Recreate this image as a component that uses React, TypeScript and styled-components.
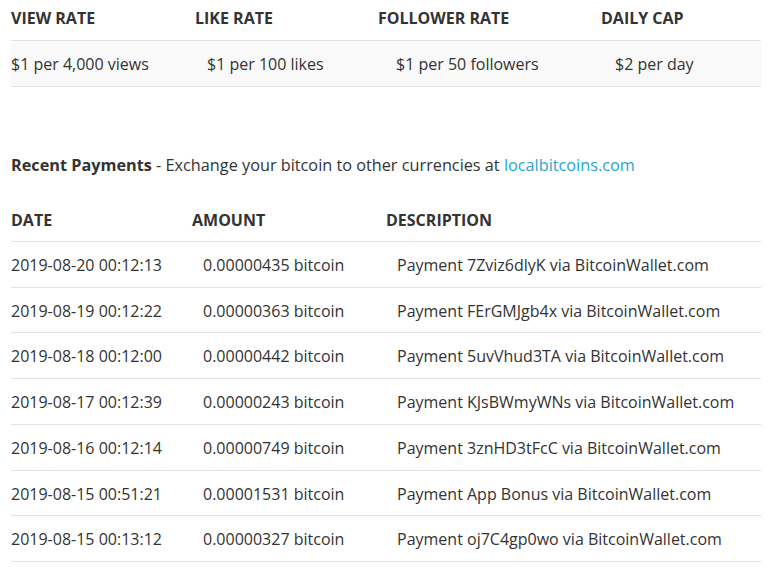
import React from 'react';
import styled, { createGlobalStyle } from 'styled-components';

interface Payment {
  date: string;
  amount: string;
  code: string;
}

const rates = [
  { label: 'VIEW RATE', value: '$1 per 4,000 views' },
  { label: 'LIKE RATE', value: '$1 per 100 likes' },
  { label: 'FOLLOWER RATE', value: '$1 per 50 followers' },
  { label: 'DAILY CAP', value: '$2 per day' },
];

const payments: Payment[] = [
  { date: '2019-08-20 00:12:13', amount: '0.00000435', code: '7Zviz6dlyK' },
  { date: '2019-08-19 00:12:22', amount: '0.00000363', code: 'FErGMJgb4x' },
  { date: '2019-08-18 00:12:00', amount: '0.00000442', code: '5uvVhud3TA' },
  { date: '2019-08-17 00:12:39', amount: '0.00000243', code: 'KJsBWmyWNs' },
  { date: '2019-08-16 00:12:14', amount: '0.00000749', code: '3znHD3tFcC' },
  { date: '2019-08-15 00:51:21', amount: '0.00001531', code: 'App Bonus' },
  { date: '2019-08-15 00:13:12', amount: '0.00000327', code: 'oj7C4gp0wo' },
];

export default function App() {
  return (
    <>
      <GlobalStyle />
      <Page>
        <RatesTable>
          <RateHead>
            {rates.map((r) => (
              <HeadCell key={r.label}>{r.label}</HeadCell>
            ))}
          </RateHead>
          <RateBody>
            {rates.map((r) => (
              <Cell key={r.label}>{r.value}</Cell>
            ))}
          </RateBody>
        </RatesTable>

        <Intro>
          <strong>Recent Payments</strong> - Exchange your bitcoin to other currencies at{' '}
          <Link href="#">localbitcoins.com</Link>
        </Intro>

        <PaymentsTable>
          <PaymentHead>
            <HeadCell>DATE</HeadCell>
            <HeadCell>AMOUNT</HeadCell>
            <HeadCell>DESCRIPTION</HeadCell>
          </PaymentHead>
          {payments.map((p) => (
            <PaymentRow key={p.date + p.code}>
              <Cell>{p.date}</Cell>
              <Cell indent>{p.amount} bitcoin</Cell>
              <Cell indent>Payment {p.code} via BitcoinWallet.com</Cell>
            </PaymentRow>
          ))}
        </PaymentsTable>
      </Page>
    </>
  );
}

const GlobalStyle = createGlobalStyle`
  body {
    margin: 0;
    background: #fff;
    font-family: "Open Sans", "Liberation Sans", sans-serif;
    color: #333;
  }
`;

const Page = styled.div`
  width: 750px;
  padding: 0 0 0 11px;
  font-size: 16px;
`;

const RatesTable = styled.div`
  display: flex;
  flex-direction: column;
`;

const RateHead = styled.div`
  display: grid;
  grid-template-columns: 184px 183px 223px 1fr;
  padding: 8px 0 11px;
  line-height: 21px;
  border-bottom: 1px solid #e2e2e2;
`;

const RateBody = styled.div`
  display: grid;
  grid-template-columns: 196px 189px 219px 1fr;
  padding: 13px 0 11px;
  line-height: 21px;
  background: #f9f9f9;
  border-bottom: 1px solid #e2e2e2;
`;

const HeadCell = styled.div`
  font-weight: 700;
  white-space: nowrap;
`;

const Cell = styled.div<{ indent?: boolean }>`
  white-space: nowrap;
  padding-left: ${(p) => (p.indent ? '11px' : '0')};
`;

const Intro = styled.p`
  margin: 68px 0 0;
  line-height: 21px;
  font-size: 16.25px;
`;

const Link = styled.a`
  color: #29a6cf;
  text-decoration: none;
`;

const PaymentsTable = styled.div`
  display: flex;
  flex-direction: column;
  margin-top: 34px;
`;

const PaymentHead = styled.div`
  display: grid;
  grid-template-columns: 181px 194px 1fr;
  padding: 0 0 10px;
  line-height: 21px;
  border-bottom: 1px solid #e2e2e2;
`;

const PaymentRow = styled.div`
  display: grid;
  grid-template-columns: 181px 194px 1fr;
  padding: 13px 0 11px;
  line-height: 20.7px;
  border-bottom: 1px solid #e2e2e2;
`;
